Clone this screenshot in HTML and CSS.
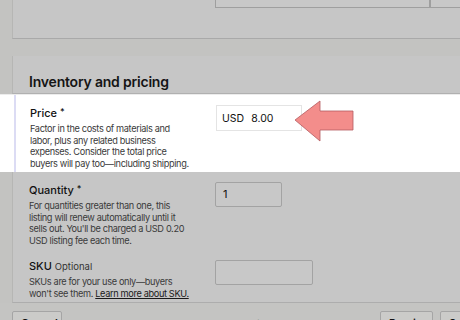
FILE: index.html
```html
<!DOCTYPE html>
<html lang="en">
<head>
    <meta charset="UTF-8">
    <title>Inventory and pricing</title>
    <link rel="stylesheet" href="styles.css">
</head>
<body>
    <div class="page">
        <div class="top-card">
            <div class="top-fields">
                <div class="cut-input wide"></div>
                <div class="cut-input small"></div>
            </div>
        </div>

        <div class="card">
            <h2 class="card-title">Inventory and pricing</h2>

            <div class="row highlight">
                <div class="row-inner">
                    <div class="field-text">
                        <div class="field-label">Price <span class="req">*</span></div>
                        <p class="field-help">Factor in the costs of materials and<br>labor, plus any related business<br>expenses. Consider the total price<br>buyers will pay too—including shipping.</p>
                    </div>
                    <div class="field-input">
                        <div class="price-box">
                            <span class="currency">USD</span>
                            <span class="amount">8.00</span>
                        </div>
                    </div>
                </div>
                <svg class="arrow" width="62" height="46" viewBox="0 0 62 46">
                    <polygon points="1,22 26,3 26,13 59,13 59,32 26,32 26,43" fill="#f38d8b" stroke="#b45a5f" stroke-width="0.8"/>
                </svg>
            </div>

            <div class="row">
                <div class="row-inner qty">
                    <div class="field-text">
                        <div class="field-label">Quantity <span class="req">*</span></div>
                        <p class="field-help">For quantities greater than one, this<br>listing will renew automatically until it<br>sells out. You'll be charged a USD 0.20<br>USD listing fee each time.</p>
                    </div>
                    <div class="field-input">
                        <div class="text-box qty-box">1</div>
                    </div>
                </div>
            </div>

            <div class="row">
                <div class="row-inner sku">
                    <div class="field-text">
                        <div class="field-label">SKU <span class="optional">Optional</span></div>
                        <p class="field-help">SKUs are for your use only—buyers<br>won't see them. <a href="#">Learn more about SKU.</a></p>
                    </div>
                    <div class="field-input">
                        <div class="text-box sku-box"></div>
                    </div>
                </div>
            </div>
        </div>

        <div class="footer">
            <button class="btn cancel">Cancel</button>
            <div class="listing-name">New - Blue Men's T-Shirt, Large</div>
            <button class="btn preview">Preview</button>
            <button class="btn save">Save</button>
        </div>
    </div>
</body>
</html>
```
FILE: styles.css
```css
body {
    margin: 0;
    font-family: Inter, "Noto Sans", Arial, sans-serif;
    background-color: #c3c3c1;
    color: #222;
}
.page {
    width: 460px;
    height: 320px;
    overflow: hidden;
}
.top-card {
    margin-left: 12px;
    height: 38px;
    background-color: #c6c6c6;
    border-left: 1px solid #b6b6b4;
    border-bottom: 1px solid #a9a9a9;
}
.top-fields {
    display: flex;
    padding-left: 202px;
}
.cut-input {
    height: 7px;
    border: 1px solid #9f9f9f;
    border-top: none;
    background-color: #c8c8c8;
}
.cut-input.wide {
    width: 213px;
}
.cut-input.small {
    flex: 1;
    border-right: none;
}
.card {
    margin-top: 17px;
}
.card-title {
    margin: 0 0 0 12px;
    padding: 17px 16px 0;
    height: 20px;
    font-size: 14px;
    letter-spacing: -0.2px;
    font-weight: 600;
    color: #151515;
    background-color: #c6c6c6;
    border-left: 1px solid #b6b6b4;
    border-bottom: 1px solid #b0b0b0;
}
.row {
    position: relative;
}
.row.highlight {
    background-color: #fff;
    padding-left: 14px;
    border-top: 1px solid #ececec;
}
.row-inner {
    display: flex;
    margin-left: 12px;
    padding: 10px 0 6px 16px;
    background-color: #c6c6c6;
    border-left: 1px solid #b6b6b4;
}
.highlight .row-inner {
    margin-left: 0;
    padding-left: 14px;
    padding-bottom: 3px;
    background-color: #fff;
    border-left: 2px solid #dcdcf4;
}
.row-inner.qty {
    padding-top: 10px;
    padding-bottom: 7px;
}
.row-inner.sku {
    padding-top: 7px;
    padding-bottom: 3px;
    border-bottom: 1px solid #adadad;
}
.field-text {
    width: 170px;
}
.field-label {
    font-size: 11px;
    font-weight: 500;
    line-height: 13px;
    color: #111;
}
.req {
    font-size: 9px;
    vertical-align: 2px;
}
.optional {
    font-size: 9.5px;
    font-weight: 400;
    color: #333;
}
.field-help {
    margin: 3px 0 0;
    white-space: nowrap;
    font-size: 9.2px;
    letter-spacing: -0.35px;
    line-height: 11.5px;
    color: #3a3a3a;
}
.field-help a {
    color: #1a1a1a;
    text-decoration: underline;
}
.field-input {
    padding-left: 16px;
}
.price-box {
    display: flex;
    align-items: center;
    width: 84px;
    height: 24px;
    border: 1px solid #e4e4e4;
    font-size: 10.5px;
    color: #111;
}
.currency {
    padding: 0 7px 0 5px;
}
.text-box {
    height: 23px;
    border: 1px solid #a3a3a3;
    border-radius: 2px;
    background-color: #c8c8c8;
    font-size: 11px;
    line-height: 23px;
    padding-left: 7px;
    color: #111;
}
.qty-box {
    width: 58px;
}
.sku-box {
    width: 89px;
}
.arrow {
    position: absolute;
    left: 294px;
    top: 3px;
}
.footer {
    display: flex;
    align-items: flex-start;
    padding: 8px 0 0 12px;
    height: 20px;
    background-color: #c4c4c2;
}
.footer > * {
    flex-shrink: 0;
}
.btn {
    font-family: inherit;
    font-size: 11px;
    font-weight: 600;
    color: #111;
    background-color: #cbcbc9;
    border: 1px solid #a5a5a5;
    border-radius: 2px;
    height: 22px;
    padding: 2px 8px 0;
    text-align: left;
}
.cancel {
    width: 50px;
}
.listing-name {
    width: 316px;
    padding-top: 7px;
    text-align: center;
    font-size: 11px;
    color: #222;
}
.preview {
    width: 53px;
    margin-left: 2px;
}
.save {
    margin-left: 7px;
    width: 40px;
}
```
